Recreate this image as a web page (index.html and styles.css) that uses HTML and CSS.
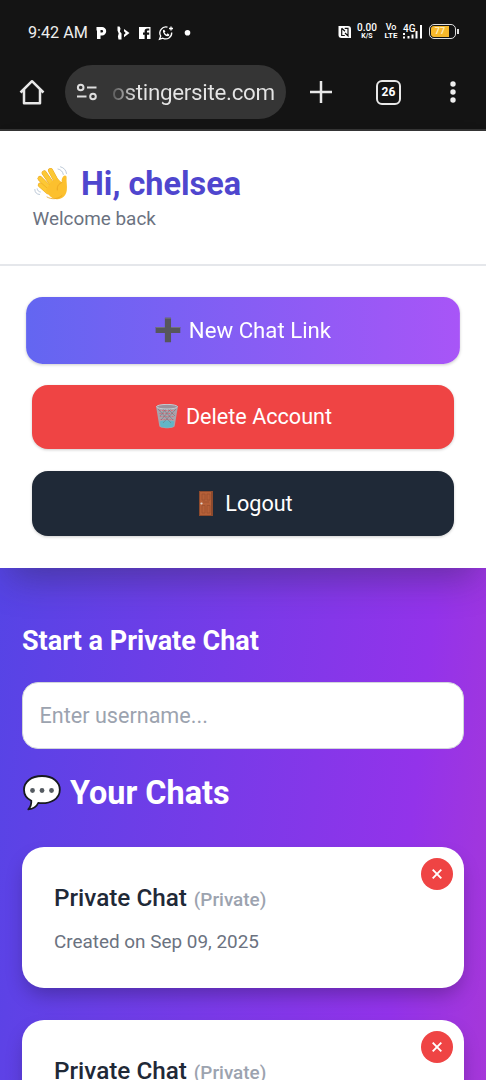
FILE: index.html
```html
<!DOCTYPE html>
<html lang="en">
<head>
<meta charset="utf-8">
<meta name="viewport" content="width=device-width">
<title>Chats</title>
<link rel="stylesheet" href="styles.css">
</head>
<body>
<div class="phone">
  <header class="chrome">
    <div class="status">
      <span class="clock">9:42 AM</span>
      <svg class="notifs" width="100" height="20" viewBox="0 0 100 20" fill="#fff">
        <path fill-rule="evenodd" d="M.5 4H6a4.200 4.200 0 0 1 0 8.400H4.500V16H1V7.500H.5zM4.500 7v2.600h1.300a1.300 1.300 0 0 0 0-2.600z"/>
        <path d="M21.500 3.500h2l1 2-.6 3 1.600 2v6h-3l-.6-3 .8-3-1.200-3zM28 6l5.500 4-5.500 4.300v-2.500l1.700-1.800L28 8.200z"/>
        <path fill-rule="evenodd" d="M43 4h11.500v12H51v-4.200h2.200V9.500H51V8.300c0-.6.400-.8 1-.8h1.300V5.600h-2c-1.800 0-2.700 1-2.700 2.500v1.400H47v2.300h1.600V16H43z"/>
        <g fill="none" stroke="#fff" stroke-width="1.300"><path d="M71.500 4.200a6 6 0 0 0-6.800 8.800l-1.200 3.200 3.400-1a6 6 0 0 0 8.800-5.700M73 5.500h4M75 3.500v4"/><path d="M67.700 7c-1 3 2.500 6.500 5.300 5.200M67.700 7l1.200 2M73 12.200l-1.800-1.400"/></g>
        <circle cx="91.500" cy="9.800" r="2.800"/>
      </svg>
      <div class="signals">
        <svg class="nfc" width="14" height="14" viewBox="0 0 14 14"><path fill="#fff" d="M.5 1H10q3 0 3 3v9H3.500q-3 0-3-3z"/><path fill="none" stroke="#141414" stroke-width="1.200" d="M3.700 3.200v7.300h3.100M3.700 3.200l3.300 3M6.700 3.300H10v7.500L7 8"/></svg>
        <span class="stack speed"><b>0.00</b><small>K/S</small></span>
        <span class="stack volte"><b>Vo</b><small>LTE</small></span>
        <span class="cell"><b>4G</b><svg width="20" height="14" viewBox="0 0 20 14" fill="#fff"><path d="M0 8h2v2H0zM0 11.500h2v2H0zM4.500 11h2v2.500h-2zM8.500 9.500h2v4h-2zM12.500 6h2v7.500h-2zM17 0h2v13.500h-2z"/></svg></span>
        <span class="battery"><span class="charge">77</span></span>
      </div>
    </div>
    <div class="toolbar">
      <svg class="home" width="26" height="28" viewBox="0 0 26 28" fill="none" stroke="#e8e8e8" stroke-width="2.500" stroke-linejoin="round"><path d="M1.500 14.500L13 3.200l11.500 11.300M5 11.500V25.200h16V11.500"/></svg>
      <div class="address">
        <svg width="22" height="18" viewBox="0 0 22 18" fill="none" stroke="#dedede" stroke-width="2"><circle cx="4.700" cy="4.500" r="2.800"/><path d="M11 4.500h9.500M1 13.500h9.500"/><circle cx="17" cy="13.500" r="2.800"/></svg>
        <span class="url">ostingersite.com</span>
      </div>
      <svg class="plus" width="22" height="22" viewBox="0 0 22 22" stroke="#e8e8e8" stroke-width="2.500"><path d="M0 11h22M11 0v22"/></svg>
      <span class="tabs">26</span>
      <svg class="more" width="6" height="24" viewBox="0 0 6 24" fill="#eee"><circle cx="3" cy="4" r="2.700"/><circle cx="3" cy="12" r="2.700"/><circle cx="3" cy="20" r="2.700"/></svg>
    </div>
  </header>

  <section class="panel">
    <div class="greeting">
      <h1>
        <svg width="36" height="36" viewBox="0 0 36 36" stroke-linecap="round" stroke-linejoin="round">
          <g fill="none" stroke="#e9a21f" stroke-width="5"><path d="M16.500 4.500l6 11"/></g>
          <g fill="none" stroke="#fcc835" stroke-width="4.200"><path d="M16.500 4.500l6 11"/></g>
          <g fill="none" stroke="#e9a21f" stroke-width="5"><path d="M10.200 7l8.500 12"/></g>
          <g fill="none" stroke="#fcc835" stroke-width="4.200"><path d="M10.200 7l8.500 12"/></g>
          <g fill="none" stroke="#e9a21f" stroke-width="5"><path d="M6 12.500l10 10"/></g>
          <g fill="none" stroke="#fcc835" stroke-width="4.200"><path d="M6 12.500l10 10"/></g>
          <g fill="none" stroke="#e9a21f" stroke-width="4.800"><path d="M6.200 19l8 7"/></g>
          <g fill="none" stroke="#fcc835" stroke-width="4"><path d="M6.200 19l8 7"/></g>
          <path fill="#fcc02e" d="M12 24l5-8 6-4 4.800 4.500c-.6-2.500.3-4.800 1.600-6.200 1.500-1.500 3.400-.5 3.200 1.500-.4 4 .8 8 .2 12.500-.8 6.500-5.800 9.700-11.300 8.700-4.500-.8-7.500-4.500-9.500-9z"/>
          <path fill="none" stroke="#e9a21f" stroke-width=".8" d="M27.800 16.500c-3.500 1.500-5 4-4.500 7.500M13 31c5 3 11.500 2 15-1.500"/>
          <g fill="none" stroke="#b5c3d3" stroke-width=".9"><path d="M24 3c3 .7 4.800 2.600 5.300 5.500M26.500.8c3.700 1 5.500 3.400 6 6.700M.8 23.500c.1 3 1.800 4.800 4.800 5M3.200 22.800c.2 1.800 1.300 2.900 3.200 3.200"/></g>
        </svg>
        <span>Hi, chelsea</span>
      </h1>
      <p>Welcome back</p>
    </div>
    <nav class="actions">
      <button class="btn create">
        <svg width="26" height="26" viewBox="0 0 26 26"><path fill="#56565c" d="M10 1h6v9h9v6h-9v9h-6v-9H1v-6h9z"/><path fill="#72727a" d="M10 1h6v1h-6zM1 10h9v1H1zM16 10h9v1h-9z"/></svg>
        <span>New Chat Link</span>
      </button>
      <button class="btn delete">
        <svg width="22" height="25" viewBox="0 0 22 25"><path fill="#a7a4ac" d="M0 2h22l-3.300 20c-.3 3-15 3-15.400 0z"/><path fill="#62b6c6" d="M3.800 17.500c4-1.400 10.500-1.400 14.400 0l-.8 5c-3 1.500-10 1.500-12.800 0z"/><path stroke="#d66f7b" stroke-width="1.100" stroke-dasharray="1.700 1.300" d="M3 6.500h16M3.300 9.500h15.400M3.800 12.500h14.400M4.500 15.500h13"/><path fill="none" stroke="#77727c" stroke-width=".6" d="M2 5l13 14M7 5l10 11M12 5l7 7M20 5L7 19M15 5L5 16M10 5l-6 7"/><ellipse cx="11" cy="2.700" rx="10.500" ry="2.300" fill="#9c929b" stroke="#c3ccd2"/></svg>
        <span>Delete Account</span>
      </button>
      <button class="btn logout">
        <svg width="14" height="25" viewBox="0 0 14 25"><path fill="#8d4a2d" d="M0 0h14v25H0z"/><path fill="#b66038" d="M1 1h11v23H1z"/><path fill="none" stroke="#9c5030" stroke-width=".8" d="M3 3h3v6H3zM8 3h3v6H8zM3 14.500h3V22H3zM8 14.500h3V22H8zM4 11h6"/><circle cx="2.500" cy="12.500" r="1.100" fill="#e5d7cf"/></svg>
        <span>Logout</span>
      </button>
    </nav>
  </section>

  <main class="content">
    <h2>Start a Private Chat</h2>
    <input class="username" type="text" placeholder="Enter username...">
    <h2 class="chats-title">
      <svg width="40" height="38" viewBox="0 0 40 38"><path fill="#fff" stroke="#171a20" stroke-width="1.800" stroke-linejoin="round" d="M20 2C9 2 2 8 2 15.700c0 5 2.600 8.800 7.300 11 .2 3.500-.8 6.300-3 8.600 4.800-.3 8.200-2.500 9.900-6.300 12.800 1.300 21.600-4.300 21.600-13.300C37.800 8 31 2 20 2z"/><g fill="#555b61"><circle cx="10.500" cy="16.500" r="2.400"/><circle cx="20" cy="16.500" r="2.400"/><circle cx="29.500" cy="16.500" r="2.400"/></g></svg>
      <span>Your Chats</span>
    </h2>
    <article class="card">
      <h3>Private Chat <small>(Private)</small></h3>
      <p>Created on Sep 09, 2025</p>
      <button class="remove" aria-label="Remove"><svg width="10" height="10" viewBox="0 0 10 10" stroke="#fff" stroke-width="1.900"><path d="M.7.7l8.600 8.600M9.300.7L.7 9.300"/></svg></button>
    </article>
    <article class="card">
      <h3>Private Chat <small>(Private)</small></h3>
      <button class="remove" aria-label="Remove"><svg width="10" height="10" viewBox="0 0 10 10" stroke="#fff" stroke-width="1.900"><path d="M.7.7l8.600 8.600M9.300.7L.7 9.300"/></svg></button>
    </article>
  </main>
</div>
</body>
</html>
```
FILE: styles.css
```css
* { box-sizing: border-box; margin: 0; padding: 0; }
body { font-family: Roboto, sans-serif; overflow: hidden; }
svg { display: block; flex: none; }
button { border: 0; font: inherit; }

.phone { width: 486px; height: 1080px; overflow: hidden; display: flex; flex-direction: column; }

/* Browser chrome */
.chrome { height: 131px; flex: none; background: #141414; border-bottom: 2px solid #353535; color: #fff; }
.status { height: 63px; padding: 2px 30px 0 28px; display: flex; align-items: center; }
.clock { font-size: 16.2px; width: 68px; white-space: nowrap; color: #eee; }
.notifs { flex: none; }
.signals { margin-left: auto; display: flex; align-items: center; height: 20px; margin-top: -2px; }
.nfc { margin-right: 5px; }
.stack { display: flex; flex-direction: column; align-items: center; }
.stack b { font-size: 10px; line-height: 9px; font-weight: 500; }
.stack small { font-size: 7px; line-height: 8px; font-weight: 700; }
.speed { width: 20px; margin-right: 7px; }
.volte { width: 14px; margin-right: 5px; }
.volte b { font-size: 9px; }
.volte small { font-size: 8px; }
.cell { display: grid; width: 20px; margin-right: 6px; }
.cell b { grid-area: 1 / 1; font-size: 10px; line-height: 9px; font-weight: 500; }
.cell svg { grid-area: 1 / 1; margin-top: 1px; }
.battery { display: flex; width: 27px; height: 15px; border: 1.500px solid #ddd; border-radius: 5px; padding: 1px; position: relative; }
.battery::after { content: ""; position: absolute; right: -4px; top: 4px; width: 2px; height: 5px; background: #ddd; }
.charge { width: 18px; border-radius: 3px 0 0 3px; background: #f8b92b; color: #ffebb4; font-size: 9px; line-height: 11px; font-weight: 700; text-align: center; }
.toolbar { height: 58px; display: flex; align-items: center; padding-left: 19px; }
.home { margin-right: 20px; }
.address { width: 221px; height: 54px; border-radius: 27px; background: #353535; display: flex; align-items: center; padding-left: 11px; margin-right: 24px; }
.url { margin-left: 14px; font-size: 22.400px; letter-spacing: -.3px; white-space: nowrap; color: transparent; background: linear-gradient(90deg, #555, #e5e5e5 24px); background-clip: text; -webkit-background-clip: text; }
.plus { margin-right: 44px; }
.tabs { width: 25px; height: 25px; border: 2.500px solid #e8e8e8; border-radius: 6px; font-size: 12px; font-weight: 700; display: flex; align-items: center; justify-content: center; margin-right: 49px; }

/* Account panel */
.panel { height: 437px; flex: none; background: #fff; position: relative; box-shadow: 0 20px 34px -10px rgba(40, 40, 60, .4); }
.greeting { height: 135px; border-bottom: 2px solid #e5e7eb; padding: 32px 32px 0; }
.greeting h1 { height: 42px; display: flex; align-items: center; gap: 11px; color: #4f46ce; font-size: 32.400px; font-weight: 700; padding-left: 2px; }
.greeting p { color: #6b7280; font-size: 18.900px; line-height: 27px; padding-left: .5px; }
.actions { padding: 32px 32px 0; display: flex; flex-direction: column; gap: 22px; }
.btn { height: 64.500px; border-radius: 16px; display: flex; align-items: center; justify-content: center; color: #fff; font-size: 21.600px; box-shadow: 0 1px 3px rgba(0, 0, 0, .2); }
.create { transform: scale(1.028); background: linear-gradient(90deg, #6366f1, #a855f7); gap: 7px; }
.delete { background: #ef4444; gap: 8px; padding-left: 2px; }
.logout { background: #1f2937; gap: 12px; padding-left: 6px; }

/* Chats */
.content { flex: 1; min-height: 0; padding: 54px 22px 0; background: linear-gradient(to bottom right, #4f46e5, #9333ea, #ec4899) 0 -437px / 100% 4500px; }
.content h2 { color: #fff; font-size: 27px; line-height: 38px; font-weight: 700; }
.username { display: block; width: 100%; height: 67px; margin-top: 22px; border: 1px solid #d1d5db; border-radius: 16px; padding: 0 16.500px; background: #fff; font: 21.600px Roboto, sans-serif; }
.username::placeholder { color: #9ca3af; }
.content .chats-title { display: flex; align-items: center; gap: 8px; height: 44px; margin: 21.500px 0 32px; font-size: 32.400px; }
.card { position: relative; height: 141px; margin-bottom: 32px; padding: 32px 32px; border-radius: 22px; background: #fff; box-shadow: 0 10px 20px -4px rgba(0, 0, 0, .28); }
.card h3 { font-size: 24.300px; line-height: 38px; font-weight: 500; color: #1f2937; }
.card h3 small { font-size: 18.900px; color: #9ca3af; margin-left: .8px; }
.card p { font-size: 18.900px; line-height: 27px; margin-top: 9px; color: #6b7280; }
.remove { position: absolute; top: 11px; right: 11px; width: 32px; height: 32px; border-radius: 50%; background: #ef4444; display: flex; align-items: center; justify-content: center; }
```
